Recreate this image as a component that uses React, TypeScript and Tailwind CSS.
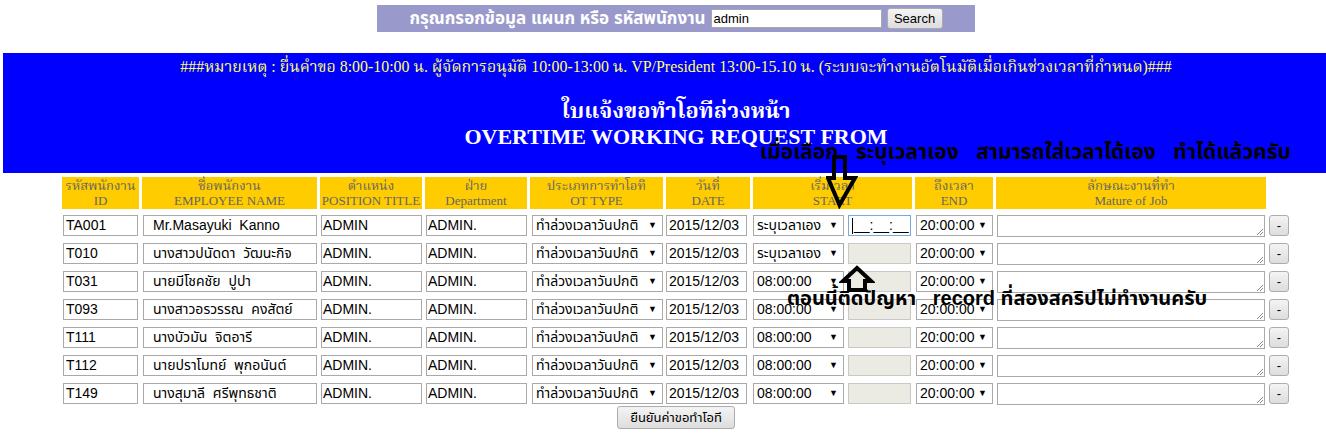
const SERIF = "font-['Liberation_Serif','Noto_Serif_Thai','Noto_Sans_Thai','Tahoma',serif]";

type Row = {
  id: string;
  name: string;
  pos: string;
  start: string;
};

const rows: Row[] = [
  { id: "TA001", name: "Mr.Masayuki  Kanno", pos: "ADMIN", start: "ระบุเวลาเอง" },
  { id: "T010", name: "นางสาวปนัดดา  วัฒนะกิจ", pos: "ADMIN.", start: "ระบุเวลาเอง" },
  { id: "T031", name: "นายมีโชคชัย  ปูปา", pos: "ADMIN.", start: "08:00:00" },
  { id: "T093", name: "นางสาวอรวรรณ  คงสัตย์", pos: "ADMIN.", start: "08:00:00" },
  { id: "T111", name: "นางบัวมัน  จิตอารี", pos: "ADMIN.", start: "08:00:00" },
  { id: "T112", name: "นายปราโมทย์  พุกอนันต์", pos: "ADMIN.", start: "08:00:00" },
  { id: "T149", name: "นางสุมาลี  ศรีพุทธชาติ", pos: "ADMIN.", start: "08:00:00" },
];

const headers = [
  ["รหัสพนักงาน", "ID"],
  ["ชื่อพนักงาน", "EMPLOYEE NAME"],
  ["ตำแหน่ง", "POSITION TITLE"],
  ["ฝ่าย", "Department"],
  ["ประเภทการทำโอที", "OT TYPE"],
  ["วันที่", "DATE"],
  ["เริ่มเวลา", "START"],
  ["ถึงเวลา", "END"],
  ["ลักษณะงานที่ทำ", "Mature of Job"],
];

function TextBox({ value, className = "" }: { value: string; className?: string }) {
  return (
    <div
      className={`h-[21px] border border-[#a9a9a9] bg-white px-[1px] text-[14px] leading-[19px] text-black whitespace-pre overflow-hidden ${className}`}
    >
      {value}
    </div>
  );
}

function Select({ value, className = "" }: { value: string; className?: string }) {
  return (
    <div
      className={`flex h-[21px] items-center justify-between border border-[#a9a9a9] bg-white pl-[3px] pr-[5px] text-[14px] leading-[19px] text-black whitespace-nowrap ${className}`}
    >
      <span>{value}</span>
      <span className="text-[9px]">▼</span>
    </div>
  );
}

function GrayButton({ children, className = "" }: { children: React.ReactNode; className?: string }) {
  return (
    <div
      className={`flex items-center justify-center rounded-[3px] border border-[#acacac] bg-gradient-to-b from-[#f4f4f4] to-[#dddddd] text-black ${className}`}
    >
      {children}
    </div>
  );
}

export default function App() {
  return (
    <div className="w-full overflow-hidden bg-white font-['Liberation_Sans','Noto_Sans_Thai','Tahoma',sans-serif]">
      <div className="relative ml-[3px] w-[1346px] pt-[5px] pb-[6px]">
        {/* search bar */}
        <div className="mx-auto flex h-[27px] w-[598px] items-center justify-center bg-[#9999cc]">
          <span className="text-[17px] font-bold text-white">กรุณกรอกข้อมูล แผนก หรือ รหัสพนักงาน</span>
          <div className="ml-[5px] h-[19px] w-[171px] border border-[#a9a9a9] bg-white px-[2px] text-[13px] leading-[17px] text-black">
            admin
          </div>
          <GrayButton className="ml-[5px] h-[21px] w-[56px] text-[13px]">Search</GrayButton>
        </div>

        {/* banner */}
        <div className={`mt-[21px] h-[120px] bg-[#0000ff] text-center ${SERIF}`}>
          <div className="pt-[4px] text-[15.9px] leading-[19px] text-[#ffff66]">
            ###หมายเหตุ : ยื่นคำขอ 8:00-10:00 น. ผู้จัดการอนุมัติ 10:00-13:00 น. VP/President 13:00-15.10 น. (ระบบจะทำงานอัตโนมัติเมื่อเกินช่วงเวลาที่กำหนด)###
          </div>
          <div className="mt-[21px] text-[22px] font-bold leading-[27px] text-white">ใบแจ้งขอทำโอทีล่วงหน้า</div>
          <div className="text-[22px] font-bold leading-[25px] text-white">OVERTIME WORKING REQUEST FROM</div>
        </div>

        {/* table */}
        <div className="ml-[59px] mt-[4px] flex w-[1229px] flex-col gap-y-[3px]">
          <div className="grid h-[32px] grid-cols-[77px_175px_102px_102px_133px_84px_159px_78px_270px] gap-x-[3px]">
            {headers.map(([th, en]) => (
              <div
                key={en}
                className={`flex flex-col items-center justify-center bg-[#ffcc00] text-[13px] leading-[15px] text-[#666666] ${SERIF}`}
              >
                <span>{th}</span>
                <span>{en}</span>
              </div>
            ))}
          </div>

          {rows.map((r, i) => (
            <div
              key={r.id}
              className="grid h-[25px] grid-cols-[77px_175px_102px_102px_133px_84px_159px_78px_270px_22px] items-start gap-x-[3px] pt-[3px]"
            >
              <div className="pl-[1px]">
                <TextBox value={r.id} className="w-[75px] pl-[2px]" />
              </div>
              <div className="pl-[1px]">
                <TextBox value={r.name} className="w-[174px] pl-[9px] text-[13px]" />
              </div>
              <div className="pl-[1px]">
                <TextBox value={r.pos} className="w-[101px]" />
              </div>
              <div className="pl-[1px]">
                <TextBox value="ADMIN." className="w-[101px]" />
              </div>
              <div className="pl-[2px]">
                <Select value="ทำล่วงเวลาวันปกติ" className="w-[131px] text-[13px]" />
              </div>
              <div>
                <TextBox value="2015/12/03" className="w-[81px] pl-[2px]" />
              </div>
              <div className="flex">
                <Select value={r.start} className="w-[91px] text-[13px]" />
                {i === 0 ? (
                  <div className="ml-[4px] flex h-[21px] w-[63px] items-center border border-[#7ea6d6] bg-white pl-[3px] text-[14px] text-black">
                    <span className="mr-[1px] h-[16px] w-px bg-black" />
                    <span>__:__:__</span>
                  </div>
                ) : (
                  <div className="ml-[4px] h-[21px] w-[63px] border border-[#c8c8c8] bg-[#ebebe4]" />
                )}
              </div>
              <div className="pl-[1px]">
                <Select value="20:00:00" className="w-[77px]" />
              </div>
              <div className="pl-[1px]">
                <div className="relative h-[22px] w-[268px] border border-[#a9a9a9] bg-white">
                  <svg className="absolute bottom-[1px] right-[1px]" width="7" height="7" viewBox="0 0 7 7">
                    <path d="M1 7 L7 1 M4 7 L7 4" stroke="#888" strokeWidth="1" />
                  </svg>
                </div>
              </div>
              <div>
                <GrayButton className="h-[21px] w-[20px] text-[13px]">-</GrayButton>
              </div>
            </div>
          ))}
        </div>

        <div className="mt-[1px] flex justify-center">
          <GrayButton className="h-[23px] w-[118px] text-[13px]">ยืนยันค่าขอทำโอที</GrayButton>
        </div>

        {/* annotations */}
        <div className="absolute left-[757px] top-[138px] whitespace-pre text-[21px] font-bold leading-[27px] text-black">
          เมื่อเลือก   ระบุเวลาเอง   สามารถใส่เวลาได้เอง   ทำได้แล้วครับ
        </div>
        <svg className="absolute left-[823px] top-[154px]" width="32" height="55" viewBox="0 0 32 55">
          <polygon points="8,3 19,3 19,24 29,24 13.5,51 2,24 8,24" fill="none" stroke="#000" strokeWidth="4" strokeLinejoin="miter" />
        </svg>
        <svg className="absolute left-[836px] top-[264px]" width="36" height="30" viewBox="0 0 36 30">
          <polygon points="18,4 32,17 26,17 26,26 10,26 10,17 4,17" fill="none" stroke="#000" strokeWidth="4" strokeLinejoin="miter" />
        </svg>
        <div className="absolute left-[784px] top-[285px] whitespace-pre text-[20px] font-bold leading-[26px] text-black">
          ตอนนี้ติดปัญหา   record ที่สองสคริปไม่ทำงานครับ
        </div>
      </div>
    </div>
  );
}
